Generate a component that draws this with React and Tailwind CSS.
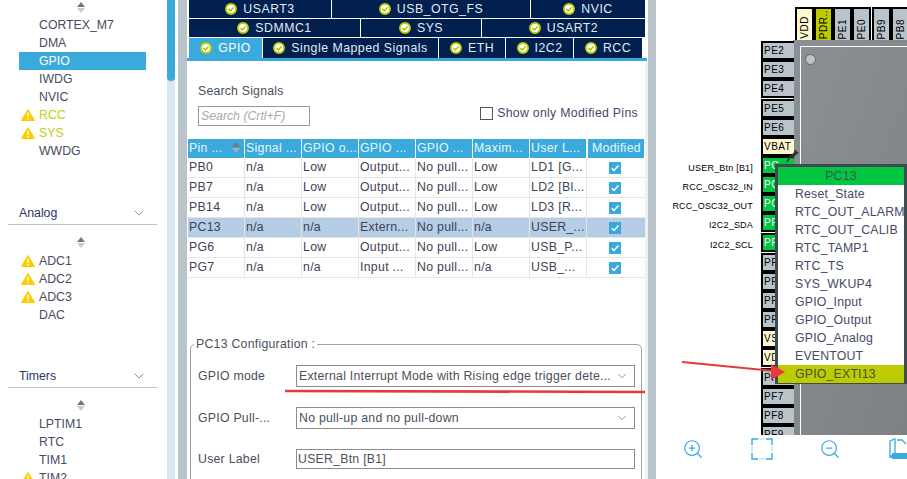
import { ChevronDown, ZoomIn, ZoomOut } from 'lucide-react'

const font = { fontFamily: '"Liberation Sans", Arial, sans-serif' }

function Warn() {
  return (
    <svg className="w-[14px] h-[12px] shrink-0" viewBox="0 0 14 12">
      <path d="M7 .5 13.6 11.5H.4Z" fill="#ffcc00" stroke="#ffcc00" strokeLinejoin="round" />
      <rect x="6.3" y="3.6" width="1.4" height="4.4" fill="#fff" />
      <rect x="6.3" y="8.8" width="1.4" height="1.5" fill="#fff" />
    </svg>
  )
}

function ScrollArrows() {
  return (
    <div className="flex flex-col items-center h-[12px] gap-[1px]">
      <div className="w-0 h-0 border-x-[4px] border-x-transparent border-b-[5px] border-b-[#777]" />
      <div className="w-0 h-0 border-x-[4px] border-x-transparent border-t-[5px] border-t-[#ccc]" />
    </div>
  )
}

function SideItem({ name, warn, active }) {
  return (
    <div className={`flex items-center h-[18px] ml-[19px] w-[127px] ${active ? 'bg-[#3aa9dc] text-white' : warn === 'y' ? 'text-[#c2cf10]' : 'text-[#474b60]'}`}>
      <div className="w-[20px] pl-[2px] flex items-center">{warn && <Warn />}</div>
      <span>{name}</span>
    </div>
  )
}

function Section({ title }) {
  return (
    <div className="ml-[8px] w-[149px] h-[19px] border-b border-[#b8c4ca] flex items-start justify-between pl-[11px] pr-[10px] text-[#2c3566]">
      <span className="leading-[14px]">{title}</span>
      <ChevronDown size={16} strokeWidth={1} className="text-[#555] -mt-[1px]" />
    </div>
  )
}

function Sidebar() {
  return (
    <div className="w-[167px] shrink-0 h-full overflow-hidden text-[12.3px] pt-[2px]">
      <div className="flex justify-center pr-[5px] mb-[2px]"><ScrollArrows /></div>
      <SideItem name="CORTEX_M7" />
      <SideItem name="DMA" />
      <SideItem name="GPIO" active />
      <SideItem name="IWDG" />
      <SideItem name="NVIC" />
      <SideItem name="RCC" warn="y" />
      <SideItem name="SYS" warn="y" />
      <SideItem name="WWDG" />
      <div className="h-[46px]" />
      <Section title="Analog" />
      <div className="flex justify-center pr-[5px] mt-[12px] mb-[3px]"><ScrollArrows /></div>
      <SideItem name="ADC1" warn="w" />
      <SideItem name="ADC2" warn="w" />
      <SideItem name="ADC3" warn="w" />
      <SideItem name="DAC" />
      <div className="h-[45px]" />
      <Section title="Timers" />
      <div className="flex justify-center pr-[5px] mt-[12px] mb-[3px]"><ScrollArrows /></div>
      <SideItem name="LPTIM1" />
      <SideItem name="RTC" />
      <SideItem name="TIM1" />
      <SideItem name="TIM2" warn="w" />
    </div>
  )
}

function Check() {
  return (
    <svg className="w-[12px] h-[12px] shrink-0" viewBox="0 0 12 12">
      <circle cx="6" cy="6" r="5" fill="#fff" stroke="#bccc00" strokeWidth="2" />
      <path d="M3.5 6 5.4 8 8.6 4.4" fill="none" stroke="#a8b800" strokeWidth="1.4" />
    </svg>
  )
}

function Tab({ name, w, active }) {
  return (
    <div
      className={`flex items-center justify-center gap-[6px] h-full shrink-0 border-r border-white tracking-[0.5px] ${active ? 'bg-[#3aa9dc] text-white' : 'bg-[#012050] text-[#e4e9f0]'}`}
      style={{ width: w }}
    >
      <Check />
      <span>{name}</span>
    </div>
  )
}

function Tabs() {
  return (
    <div className="text-[12.3px] pl-[2px]">
      <div className="flex h-[19px] border-b border-white">
        <Tab name="USART3" w={143} />
        <Tab name="USB_OTG_FS" w={199} />
        <Tab name="NVIC" w={115} />
      </div>
      <div className="flex h-[19px] border-b border-white">
        <Tab name="SDMMC1" w={172} />
        <Tab name="SYS" w={121} />
        <Tab name="USART2" w={164} />
      </div>
      <div className="flex h-[20px]">
        <Tab name="GPIO" w={74} active />
        <Tab name="Single Mapped Signals" w={176} />
        <Tab name="ETH" w={67} />
        <Tab name="I2C2" w={68} />
        <Tab name="RCC" w={69} />
      </div>
      <div className="h-[3px] bg-[#3aa9dc] -ml-[2px] w-[460px]" />
    </div>
  )
}

const headers = ['Pin ...', 'Signal ...', 'GPIO o...', 'GPIO ...', 'GPIO ...', 'Maxim...', 'User L...', 'Modified']
const rows = [
  ['PB0', 'n/a', 'Low', 'Output...', 'No pull...', 'Low', 'LD1 [G...'],
  ['PB7', 'n/a', 'Low', 'Output...', 'No pull...', 'Low', 'LD2 [Bl...'],
  ['PB14', 'n/a', 'Low', 'Output...', 'No pull...', 'Low', 'LD3 [R...'],
  ['PC13', 'n/a', 'n/a', 'Extern...', 'No pull...', 'n/a', 'USER_...'],
  ['PG6', 'n/a', 'Low', 'Output...', 'No pull...', 'Low', 'USB_P...'],
  ['PG7', 'n/a', 'n/a', 'Input ...', 'No pull...', 'n/a', 'USB_...'],
]

function Tick() {
  return (
    <div className="w-[12px] h-[12px] bg-[#3aa9dc] flex items-center justify-center">
      <svg className="w-[10px] h-[10px]" viewBox="0 0 10 10">
        <path d="M1.8 5.2 4 7.4 8.4 2.6" fill="none" stroke="#fff" strokeWidth="1.5" />
      </svg>
    </div>
  )
}

function SignalTable() {
  return (
    <div className="mt-[13px] ml-[1px] text-[12.3px] tracking-[0.3px] w-[457px] whitespace-nowrap">
      <div className="flex gap-[1px] h-[19px] text-[#eaf6fc]">
        {headers.map((h, i) => (
          <div key={i} className={`relative bg-[#3aa9dc] flex items-center pl-[1px] ${i === 7 ? 'w-[56px] ml-[1px] justify-center' : 'w-[56px]'}`}>
            <span>{h}</span>
            {i === 0 && (
              <div className="absolute right-[4px] top-[3px] flex flex-col gap-[1px]">
                <div className="w-0 h-0 border-x-[4px] border-x-transparent border-b-[5px] border-b-[#777]" />
                <div className="w-0 h-0 border-x-[4px] border-x-transparent border-t-[5px] border-t-[#8fb6c9]" />
              </div>
            )}
          </div>
        ))}
      </div>
      {rows.map((r, i) => (
        <div key={r[0]} className={`flex h-[20px] border-b border-[#e6e6e6] text-[#3f4254] ${i === 3 ? 'bg-[#b5cde5]' : ''}`}>
          {r.map((c, j) => (
            <div key={j} className="w-[57px] border-r border-[#e6e6e6] flex items-center pl-[1px]">{c}</div>
          ))}
          <div className="w-[56px] flex items-center justify-center"><Tick /></div>
        </div>
      ))}
    </div>
  )
}

function Field({ label, children, mt }) {
  return (
    <div className={`flex items-center ${mt}`}>
      <div className="w-[98px] text-[#4b5058]">{label}</div>
      {children}
    </div>
  )
}

function SelectBox({ text }) {
  return (
    <div className="w-[339px] h-[22px] border border-[#8b8b8b] flex items-center justify-between pl-[2px] pr-[5px] text-[#4b5058]">
      <span>{text}</span>
      <ChevronDown size={14} strokeWidth={1} className="text-[#555]" />
    </div>
  )
}

function Main() {
  return (
    <div className="w-[461px] shrink-0 h-full bg-white">
      <Tabs />
      <div className="h-[418px] border-r-[3px] border-[#eef2f5] pt-[23px] overflow-hidden">
        <div className="ml-[11px] text-[12.3px] leading-[14px] text-[#4b5058] tracking-[0.2px]">Search Signals</div>
        <div className="flex items-start justify-between pr-[7px] pl-[11px] mt-[8px] h-[20px] text-[12.3px]">
          <div className="w-[112px] h-[20px] border border-[#9a9a9a] italic text-[#aaa] pl-[2px] leading-[18px]">Search (Crtl+F)</div>
          <div className="flex items-center gap-[4px] text-[#454a66] leading-[14px] tracking-[0.3px]">
            <div className="w-[13px] h-[13px] border border-[#555]" />
            <span>Show only Modified Pins</span>
          </div>
        </div>
        <SignalTable />
        <div className="relative mt-[66px] ml-[3px] w-[452px] h-[150px] border border-[#a0a0a0] rounded-[5px] pl-[7px] pt-[20px] text-[12.3px] tracking-[0.25px]">
          <div className="absolute -top-[8px] left-[3px] bg-white px-[2px] leading-[14px] text-[#4b5058]">PC13 Configuration :</div>
          <Field label="GPIO mode">
            <SelectBox text="External Interrupt Mode with Rising edge trigger dete..." />
          </Field>
          <Field label="GPIO Pull-..." mt="mt-[20px]">
            <SelectBox text="No pull-up and no pull-down" />
          </Field>
          <Field label="User Label" mt="mt-[20px]">
            <div className="w-[339px] h-[20px] border border-[#8b8b8b] pl-[1px] flex items-center text-[#4b5058]">USER_Btn [B1]</div>
          </Field>
        </div>
      </div>
    </div>
  )
}

const leftPins = [
  ['PE2', 41, 'g'], ['PE3', 60, 'g'], ['PE4', 79, 'g'], ['PE5', 99, 'g'], ['PE6', 118, 'g'],
  ['VBAT', 137, 'c'], ['PC', 156, 'n'], ['PC', 175, 'n'], ['PC', 194, 'n'], ['PF', 213, 'n'], ['PF', 233, 'n'],
  ['PF', 253, 'g'], ['PF', 272, 'g'], ['PF', 291, 'g'], ['PF', 310, 'g'], ['VS', 329, 'c'], ['VD', 348, 'c'],
  ['PF', 368, 'g'], ['PF7', 387, 'g'], ['PF8', 406, 'g'], ['PF9', 425, 'g'],
]
const pinBg = { g: 'bg-[#b8c4ca] text-black', c: 'bg-[#fff7d0] text-black', n: 'bg-[#00c642] text-white' }

const topPins = [
  ['VDD', 795, 'bg-[#fff7d0]'], ['PDR..', 814, 'bg-[#bccc00]'], ['PE1', 833, 'bg-[#b8c4ca]'],
  ['PE0', 852, 'bg-[#b8c4ca]'], ['PB9', 872, 'bg-[#b8c4ca]'], ['PB8', 891, 'bg-[#b8c4ca]'],
]
const labels = [
  ['USER_Btn [B1]', 161], ['RCC_OSC32_IN', 180], ['RCC_OSC32_OUT', 199], ['I2C2_SDA', 218], ['I2C2_SCL', 238],
]
const menu = ['Reset_State', 'RTC_OUT_ALARM', 'RTC_OUT_CALIB', 'RTC_TAMP1', 'RTC_TS', 'SYS_WKUP4', 'GPIO_Input', 'GPIO_Output', 'GPIO_Analog', 'EVENTOUT']

// chip view, coordinates are page x minus 656
function ChipView() {
  return (
    <div className="relative flex-1 h-full bg-white overflow-hidden">
      <div className="absolute left-[137px] top-[40px] w-[140px] h-[395px] bg-gradient-to-br from-[#8b9094] to-[#7c8083]">
        <div className="absolute left-[7px] top-[6px] w-[140px] h-[400px] border-l border-t border-white" />
        <div className="absolute left-[12px] top-[14px] w-[11px] h-[11px] rounded-full bg-[#b8c4ca] border border-[#666]" />
      </div>
      {topPins.map(([name, x, bg]) => (
        <div
          key={name}
          className={`absolute top-[7px] h-[33px] w-[19px] border-2 border-b-0 border-black flex flex-col items-center justify-end pb-[1px] overflow-hidden ${bg}`}
          style={{ left: x - 656 }}
        >
          <span className="[writing-mode:vertical-rl] rotate-180 text-[10px] tracking-[0.5px] leading-none text-black whitespace-nowrap">{name}</span>
        </div>
      ))}
      <div className="absolute left-0 top-[435px] w-full h-[44px] bg-white z-[5]" />
      {leftPins.map(([name, y, k], i) => (
        <div
          key={i}
          className={`absolute left-[105px] w-[33px] h-[19px] border-2 border-black border-r-0 flex items-center pl-[1px] text-[10px] tracking-[0.5px] leading-none overflow-hidden ${pinBg[k]}`}
          style={{ top: y }}
        >
          {name}
        </div>
      ))}
      {labels.map(([t, y]) => (
        <div
          key={t}
          className="absolute right-[154px] text-[9px] tracking-[0.2px] leading-[14px] text-black whitespace-nowrap"
          style={{ top: y }}
        >
          {t}
        </div>
      ))}
      <svg className="absolute left-[130px] top-[148px] w-[14px] h-[16px] z-[2]" viewBox="0 0 14 16">
        <path d="M8 1l5 4-2 1-3 3 .5 2.5-5-4.5 2.5-.3L8.5 3.5Z" fill="#333" />
        <path d="M4.5 8 1 14" stroke="#333" strokeWidth="1.5" />
      </svg>
      <div className="absolute left-[119px] top-[164px] w-[132px] h-[220px] z-[3] border-[3px] border-[#3e4b4f] bg-white text-[12.3px] tracking-[0.2px] text-[#454a66]">
        <div className="h-[18px] bg-[#00c642] text-center text-[#3e5a48] leading-[18px]">PC13</div>
        {menu.map((m) => (
          <div key={m} className="h-[18px] leading-[18px] pl-[17px] whitespace-nowrap overflow-hidden">{m}</div>
        ))}
        <div className="h-[18px] leading-[18px] pl-[17px] bg-[#bccc00] text-[#4a5030]">GPIO_EXTI13</div>
      </div>
      <div className="absolute z-[6] top-[449px] left-0 w-full flex items-center text-[#3aa9dc]">
        <ZoomIn size={22} strokeWidth={1.3} className="absolute left-[26px]" />
        <svg className="absolute left-[95px] w-[22px] h-[22px]" viewBox="0 0 22 22" fill="none" stroke="currentColor" strokeWidth="1.4">
          <path d="M1 7V1h6M15 1h6v6M21 15v6h-6M7 21H1v-6" />
          <path d="M1 8v6M21 8v6M8 1h6M8 21h6" strokeOpacity="0.3" />
        </svg>
        <ZoomOut size={22} strokeWidth={1.3} className="absolute left-[163px]" />
        <svg className="absolute left-[233px] w-[22px] h-[22px]" viewBox="0 0 22 22" fill="none" stroke="currentColor" strokeWidth="1.3">
          <path d="M1 19V3l5-2v14l-5 4h21" />
          <path d="M8 2h5l4 4" />
          <rect x="3" y="15" width="19" height="6" fill="currentColor" stroke="none" />
        </svg>
      </div>
    </div>
  )
}

export default function App() {
  return (
    <div className="relative flex w-[907px] h-[479px] overflow-hidden bg-white" style={font}>
      <Sidebar />
      <div className="w-[8px] shrink-0 h-full bg-[#d9e7f3]">
        <div className="h-[81px] bg-[#3aa9dc] rounded-b-[4px]" />
      </div>
      <div className="w-[3px] shrink-0" />
      <div className="w-[9px] shrink-0 h-full bg-[#b8c4ca]" />
      <Main />
      <div className="w-[8px] shrink-0 h-full bg-[#b8c4ca]" />
      <ChipView />
      {/* red annotations drawn over the screenshot */}
      <svg className="absolute inset-0 z-10 pointer-events-none" width="907" height="479" viewBox="0 0 907 479">
        <path d="M285 391 L645 392" fill="none" stroke="#e8393a" strokeWidth="2.5" />
        <path d="M682 362 L775 371" fill="none" stroke="#e8393a" strokeWidth="2" />
        <path d="M771 364 L785 372 L771 380 Z" fill="#e8393a" />
      </svg>
    </div>
  )
}
